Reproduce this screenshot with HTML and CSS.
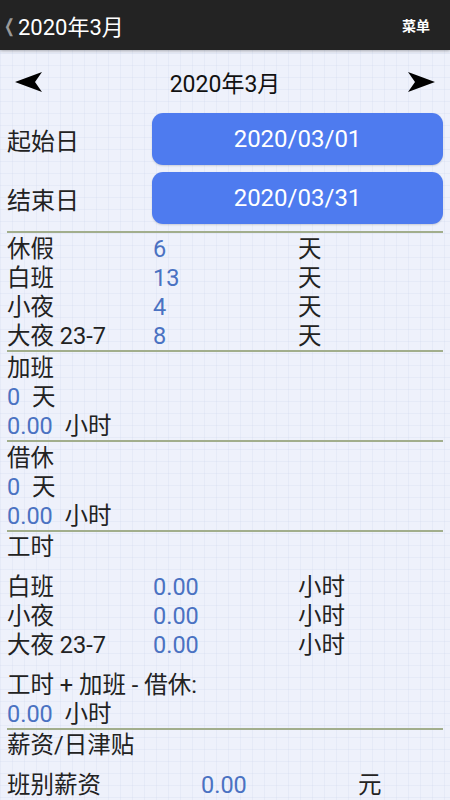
FILE: index.html
```html
<!DOCTYPE html>
<html lang="zh-CN">
<head>
  <meta charset="UTF-8" />
  <meta name="viewport" content="width=device-width, initial-scale=1.0" />
  <title>2020年3月</title>
  <link rel="stylesheet" href="styles.css">
</head>
<body>

  <div class="barra">
    <div class="titulo"><span class="volver">&#x276E;</span>2020年3月</div>
    <div class="menu">菜单</div>
  </div>

  <div class="contenido">
    <div class="mes_nav">
      <svg class="flecha" width="28" height="20" viewBox="0 0 28 20"><path d="M0 10 L27 0 L20 10 L27 20 Z" fill="#000"/></svg>
      <span class="mes">2020年3月</span>
      <svg class="flecha" width="28" height="20" viewBox="0 0 28 20"><path d="M28 10 L1 0 L8 10 L1 20 Z" fill="#000"/></svg>
    </div>

    <div class="fecha_fila">
      <span class="etiqueta">起始日</span>
      <div class="boton_fecha">2020/03/01</div>
    </div>
    <div class="fecha_fila">
      <span class="etiqueta">结束日</span>
      <div class="boton_fecha">2020/03/31</div>
    </div>

    <div class="linea"></div>

    <div class="tabla">
      <span>休假</span><span class="valor">6</span><span>天</span>
      <span>白班</span><span class="valor">13</span><span>天</span>
      <span>小夜</span><span class="valor">4</span><span>天</span>
      <span>大夜 23-7</span><span class="valor">8</span><span>天</span>
    </div>

    <div class="linea"></div>

    <div class="fila">加班</div>
    <div class="fila"><span class="valor">0</span>&nbsp; 天</div>
    <div class="fila"><span class="valor">0.00</span>&nbsp; 小时</div>

    <div class="linea"></div>

    <div class="fila">借休</div>
    <div class="fila"><span class="valor">0</span>&nbsp; 天</div>
    <div class="fila"><span class="valor">0.00</span>&nbsp; 小时</div>

    <div class="linea"></div>

    <div class="fila">工时</div>
    <div class="tabla separada">
      <span>白班</span><span class="valor">0.00</span><span>小时</span>
      <span>小夜</span><span class="valor">0.00</span><span>小时</span>
      <span>大夜 23-7</span><span class="valor">0.00</span><span>小时</span>
    </div>

    <div class="fila separada">工时 + 加班 - 借休:</div>
    <div class="fila"><span class="valor">0.00</span>&nbsp; 小时</div>

    <div class="linea"></div>

    <div class="fila">薪资/日津贴</div>
    <div class="tabla sueldo separada">
      <span>班别薪资</span><span class="valor">0.00</span><span>元</span>
    </div>
  </div>

</body>
</html>
```

FILE: styles.css
```css
* {
  box-sizing: border-box;
}

body {
  margin: 0;
  padding: 0;
  font-family: Roboto, "Noto Sans CJK SC", sans-serif;
  color: #222;
  background-color: #eef1fb;
  background-image:
    repeating-linear-gradient(0deg, rgba(205, 212, 235, 0.25) 0 1px, transparent 1px 12px),
    repeating-linear-gradient(90deg, rgba(205, 212, 235, 0.25) 0 1px, transparent 1px 12px);
  overflow: hidden;
}

.barra {
  display: flex;
  align-items: center;
  justify-content: space-between;
  height: 50px;
  padding: 0 20px 0 4px;
  background-color: #232323;
  color: #fff;
  box-shadow: 0 1px 3px rgba(0, 0, 0, 0.3);
}

.titulo {
  display: flex;
  align-items: center;
  font-size: 22px;
}

.volver {
  color: #999;
  font-size: 13px;
  margin-right: 3px;
  transform: scaleY(1.4);
}

.menu {
  font-size: 14px;
  font-weight: bold;
}

.contenido {
  padding: 0 7px;
}

.mes_nav {
  display: flex;
  align-items: center;
  justify-content: space-between;
  height: 63px;
  padding: 0 8px;
}

.mes {
  font-size: 23px;
  color: #111;
}

.fecha_fila {
  display: flex;
  align-items: center;
  margin-bottom: 7px;
}

.fecha_fila .etiqueta {
  width: 145px;
  font-size: 24px;
}

.boton_fecha {
  flex: 1;
  height: 52px;
  display: flex;
  align-items: center;
  justify-content: center;
  background-color: #4e7bef;
  color: #fff;
  font-size: 24px;
  border-radius: 11px;
  box-shadow: 0 1px 2px rgba(0, 0, 0, 0.15);
}

.linea {
  height: 2px;
  background-color: #a2ae8c;
}

.tabla {
  display: grid;
  grid-template-columns: 146px 145px auto;
  font-size: 23.5px;
}

.tabla > span,
.fila {
  font-size: 23.5px;
  line-height: 26.8px;
  padding-top: 2.5px;
}

.tabla.sueldo {
  grid-template-columns: 194px 157px auto;
}

.separada {
  margin-top: 10px;
}

.valor {
  color: #4a72c2;
}
```
